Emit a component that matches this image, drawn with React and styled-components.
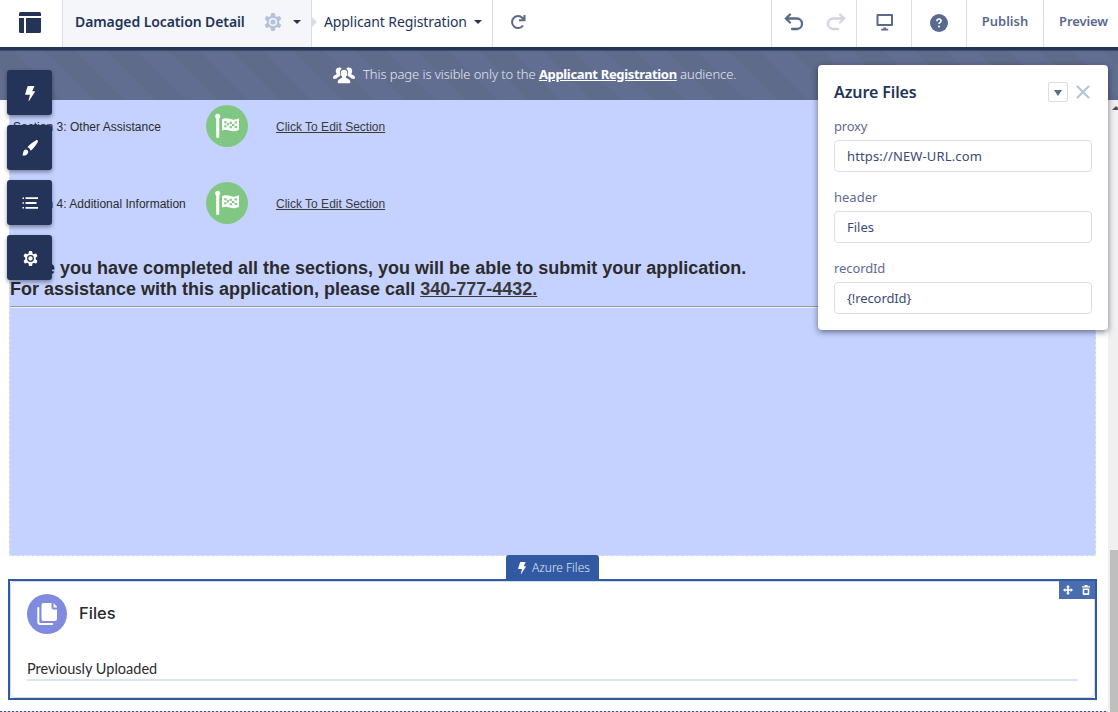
import React from "react";
import styled, { createGlobalStyle } from "styled-components";

const ui = '"Noto Sans", "Open Sans", sans-serif';

const Global = createGlobalStyle`
  * { box-sizing: border-box; }
  body { margin: 0; background: #fff; overflow: hidden; }
`;

const Shell = styled.div`
  position: relative;
  display: flex;
  flex-direction: column;
  width: 1118px;
  height: 712px;
  overflow: hidden;
  font-family: ${ui};
  color: #243458;
`;

const TopBar = styled.header`
  display: flex;
  flex: none;
  height: 50px;
  border-bottom: 3px solid #243458;
  background: #fff;
`;

const Cell = styled.div`
  display: flex;
  flex: none;
  align-items: center;
  justify-content: ${(p) => p.$justify || "center"};
  width: ${(p) => p.$width}px;
  padding: 0 ${(p) => p.$right || 0}px ${(p) => p.$bottom || 3}px ${(p) => p.$left || 0}px;
  border-left: ${(p) => (p.$line ? "1px solid #d8dde6" : "0")};
  background: ${(p) => p.$fill || "transparent"};
  position: relative;
`;

const Spacer = styled.div`
  flex: 1;
`;

const Label = styled.span`
  font-size: ${(p) => p.$size || 14}px;
  font-weight: ${(p) => p.$weight || 400};
  letter-spacing: ${(p) => p.$track || 0}px;
  color: ${(p) => p.$color || "inherit"};
  line-height: 20px;
  white-space: nowrap;
`;

const Icon = styled.svg`
  display: block;
  flex: none;
  margin-left: ${(p) => p.$ml || 0}px;
  margin-right: ${(p) => p.$mr || 0}px;
  margin-top: ${(p) => p.$mt || 0}px;
`;

const Caret = styled.i`
  flex: none;
  margin-left: ${(p) => p.$ml || 0}px;
  border: 4px solid transparent;
  border-top: 4px solid ${(p) => p.$color || "#243458"};
  border-bottom: 0;
`;

const Chevron = styled.i`
  position: absolute;
  left: 0;
  top: 17px;
  border: 5px solid transparent;
  border-left-color: #d8dde6;
  border-right: 0;
`;

const Banner = styled.div`
  display: flex;
  flex: none;
  align-items: center;
  height: 50px;
  padding: 0 0 2px 333px;
  gap: 8px;
  color: #e3e7f0;
  background: repeating-linear-gradient(45deg, #626e91 0 22px, #5f6b8a 22px 44px);
  box-shadow: inset 0 2px 1px -1px rgba(30, 40, 70, 0.5);
`;

const AudienceLink = styled.b`
  color: #fff;
  font-weight: 700;
  letter-spacing: -0.33px;
  text-decoration: underline;
`;

const Workspace = styled.main`
  display: flex;
  flex: 1;
  min-height: 0;
`;

const Page = styled.div`
  width: 1108px;
  padding-left: 9px;
`;

const Region = styled.section`
  width: 1087px;
  height: 456px;
  padding: 5px 0 0;
  border: 1px dashed #dfe5f5;
  border-top: 0;
  background: #c5d2ff;
  font-family: "Liberation Sans", Arial, sans-serif;
  color: #2b2b2b;
`;

const SectionRow = styled.div`
  display: grid;
  grid-template-columns: 196px 70px auto;
  align-items: center;
  height: 42px;
  margin-bottom: 35px;
  font-size: 12px;
`;

const SectionName = styled.span`
  padding: 2px 0 0 3px;
  letter-spacing: 0.02px;
`;

const EditLink = styled.span`
  padding-top: 2px;
  color: #3a3a3c;
  text-decoration: underline;
`;

const Notice = styled.p`
  margin: -1px 0 6px;
  font-size: 18px;
  font-weight: 700;
  line-height: 21px;
`;

const Phone = styled.span`
  color: #3a3a3c;
  text-decoration: underline;
`;

const Rule = styled.hr`
  margin: 0;
  border: 0;
  border-top: 1px solid #9a9a9a;
  border-bottom: 1px solid #eee;
`;

const TabRow = styled.div`
  display: flex;
  justify-content: center;
  height: 24px;
  margin-top: -1px;
  width: 1087px;
  position: relative;
`;

const Tab = styled.div`
  display: flex;
  align-items: center;
  width: 93px;
  height: 24px;
  padding: 2px 0 0 12px;
  gap: 6px;
  border-radius: 3px 3px 0 0;
  background: #325aa3;
`;

const Selected = styled.section`
  position: relative;
  width: 1089px;
  height: 121px;
  margin-left: -1px;
  border: 2px solid #325aa3;
`;

const Card = styled.div`
  height: 117px;
  padding: 12px 16px 0;
  border: 1px solid #d5d9e2;
  border-radius: 4px;
`;

const CardHead = styled.div`
  display: flex;
  align-items: center;
  gap: 12px;
  height: 40px;
`;

const CardTitle = styled.h2`
  margin: 0;
  padding-bottom: 2px;
  font: 500 16.5px/24px Inter, sans-serif;
  color: #272b30;
`;

const Uploaded = styled.div`
  margin-top: 23px;
  height: 24px;
  border-bottom: 2px solid #dbe4f3;
  font: 400 14.5px/24px Lato, sans-serif;
  color: #2b2c2e;
`;

const Tools = styled.div`
  position: absolute;
  right: 0;
  top: 0;
  display: flex;
  align-items: center;
  width: 36px;
  height: 18px;
  padding: 0 5px 0 4px;
  justify-content: space-between;
  background: #4a6db0;
`;

const PageEnd = styled.div`
  height: 1px;
  margin: 11px 0 0 -9px;
  background: repeating-linear-gradient(90deg, #43557c 0 2px, #d5dae3 2px 4px);
`;

const Scrollbar = styled.div`
  display: flex;
  flex-direction: column;
  width: 10px;
  background: #f0f0f0;
`;

const ScrollArrow = styled.i`
  margin: 6px 0 0 4px;
  width: 0;
  border: 4px solid transparent;
  border-top: 0;
  border-bottom-color: #505050;
`;

const Thumb = styled.div`
  flex: none;
  height: 162px;
  margin: auto 0 0 2px;
  background: #bfbfbf;
`;

const Rail = styled.nav`
  position: absolute;
  left: 7px;
  top: 70px;
  display: grid;
  gap: 10px;
`;

const RailButton = styled.div`
  display: grid;
  place-items: center;
  width: 45px;
  height: 45px;
  padding: 1px 0 0 1px;
  border-radius: 3px;
  background: #243458;
  box-shadow: 0 2px 4px rgba(0, 0, 0, 0.4);
`;

const Panel = styled.aside`
  position: absolute;
  left: 818px;
  top: 65px;
  width: 290px;
  height: 265px;
  padding: 16px;
  border-radius: 4px;
  background: #fff;
  box-shadow: 0 2px 6px rgba(10, 20, 50, 0.55);
`;

const PanelHead = styled.div`
  display: flex;
  align-items: center;
  height: 22px;
  margin-bottom: 14px;
`;

const MenuButton = styled.div`
  display: grid;
  place-items: center;
  width: 20px;
  height: 20px;
  margin-left: auto;
  border: 1px solid #d8dde6;
  border-radius: 2px;
`;

const MenuCaret = styled.i`
  border: 4.5px solid transparent;
  border-top: 6px solid #5a698c;
  border-bottom: 0;
  margin-top: 2px;
`;

const Field = styled.div`
  height: 71px;
`;

const FieldLabel = styled.div`
  height: 23px;
  font-size: 13px;
  line-height: 19px;
  letter-spacing: ${(p) => p.$track || 0}px;
  color: #5f6b8f;
`;

const Input = styled.div`
  display: flex;
  align-items: center;
  height: 32px;
  padding: 0 12px;
  border: 1px solid #d8dde6;
  border-radius: 4px;
  font-size: 13px;
  letter-spacing: ${(p) => p.$track || 0}px;
  color: #3c4b72;
`;

const GEAR =
  "M6.900 1.200Q7 0 8 0h2Q11 0 11.100 1.200L11.400 3l1.500.9 1.700-.7q1.100-.4 1.600.5l.8 1.500q.5.900-.4 1.600L15.200 8v2l1.400 1.200q.9.700.4 1.600l-.8 1.500q-.5.900-1.600.5l-1.700-.7-1.500.9-.3 1.800Q11 18 10 18H8Q7 18 6.900 16.800L6.600 15l-1.500-.9-1.700.7q-1.100.4-1.600-.5L1 12.800q-.5-.9.400-1.600L2.800 10V8L1.400 6.800Q.5 6.100 1 5.200l.8-1.500q.5-.9 1.600-.5l1.700.7L6.600 3z";

const Gear = ({ size, color, hole, ...rest }) => (
  <Icon width={size} height={size} viewBox="0 0 18 18" {...rest}>
    <path fill={color} d={GEAR} />
    <circle cx="9" cy="9" r="4.100" fill={hole} />
    <circle cx="9" cy="9" r="2.600" fill={color} />
  </Icon>
);

const Bolt = ({ w, h }) => (
  <Icon width={w} height={h} viewBox="0 0 10 15">
    <path fill="#fff" d="M3.300 0h5.500c.5 0 .6.3.4.7L7.200 5.200h2.300c.5 0 .6.400.3.800L4.200 14.700c-.4.500-.8.300-.6-.3l1.400-5.600H.7c-.5 0-.7-.3-.5-.8L2.500.6C2.600.2 2.900 0 3.300 0z" />
  </Icon>
);

const checks = [[9.2, 8.2], [14.600, 8.8], [19.600, 8.400], [11.8, 10.2], [17, 10.9], [9.2, 12.2], [14.600, 13.2], [19.600, 12.9]];

const Flag = () => (
  <Icon width="42" height="42" viewBox="0 0 42 42">
    <circle cx="21" cy="21" r="21" fill="#81c784" />
    <g transform="translate(9 8)" fill="#fff">
      <circle cx="2.700" cy="3.200" r="2.500" />
      <rect x="1.200" y="3.500" width="3" height="21.500" rx="1.500" />
      <path d="M7 6.300c2.500-1.300 5-1.300 8.500-.2 3.200 1 5.500.6 8.500-.9V16.800c-3 1.500-5.500 1.900-8.500 1C12 16.600 9.500 16.300 7 17.500z" />
      {checks.map(([x, y]) => (
        <rect key={x + "-" + y} x={x} y={y} width="2.300" height="2.100" fill="#81c784" />
      ))}
    </g>
  </Icon>
);

const Section = ({ name }) => (
  <SectionRow>
    <SectionName>{name}</SectionName>
    <Flag />
    <EditLink>Click To Edit Section</EditLink>
  </SectionRow>
);

const Property = ({ label, value, labelTrack, track }) => (
  <Field>
    <FieldLabel $track={labelTrack}>{label}</FieldLabel>
    <Input $track={track}>{value}</Input>
  </Field>
);

export default function App() {
  return (
    <Shell>
      <Global />
      <TopBar>
        <Cell $width={62} $justify="flex-start" $left={19}>
          <Icon width="22" height="21" viewBox="0 0 22 21" fill="#243458">
            <path d="M1.500 0h19A1.500 1.500 0 0 1 22 1.500V4H0V1.500A1.500 1.500 0 0 1 1.500 0zM0 6h5v15H1.500A1.500 1.500 0 0 1 0 19.500zM7 6h15v13.500a1.500 1.500 0 0 1-1.500 1.500H7z" />
          </Icon>
        </Cell>
        <Cell $width={249} $line $fill="#f4f6fa" $justify="flex-start" $left={12}>
          <Label $weight={600} $track={-0.1}>Damaged Location Detail</Label>
          <Gear size={18} color="#b5c3da" hole="#f4f6fa" $ml={19} $mt={-1} />
          <Caret $ml={11} />
        </Cell>
        <Cell $width={181} $line $justify="flex-start" $left={12}>
          <Chevron />
          <Label $track={-0.1}>Applicant Registration</Label>
          <Caret $ml={7} />
        </Cell>
        <Cell $width={52} $line $right={2} $bottom={4}>
          <Icon width="16" height="16" viewBox="0 0 16 16" fill="none" stroke="#5a698c" strokeWidth="2">
            <path d="M13 11.500A6 6 0 1 1 12.500 4L14 5.500M14.500 1v5.200H9" />
          </Icon>
        </Cell>
        <Spacer />
        <Cell $width={85} $line $left={1} $bottom={4}>
          <Icon width="20" height="18" viewBox="0 0 20 18" fill="none" stroke="#5a698c" strokeWidth="2.300" strokeLinecap="round" strokeLinejoin="round">
            <path d="M6 1.500L1.800 5.500 6 9.500M2 5.500h11a5 5 0 0 1 5 5v.500a5 5 0 0 1-5 5H8" />
          </Icon>
          <Icon width="20" height="18" viewBox="0 0 20 18" fill="none" stroke="#d0d4e0" strokeWidth="2.300" strokeLinecap="round" strokeLinejoin="round" $ml={22}>
            <path d="M14 1.500l4.200 4-4.200 4M18 5.500H7a5 5 0 0 0-5 5v.500a5 5 0 0 0 5 5h5" />
          </Icon>
        </Cell>
        <Cell $width={55} $line $left={1}>
          <Icon width="18" height="17" viewBox="0 0 18 17" fill="#5a698c">
            <path fillRule="evenodd" d="M1.500 0h14.500a1 1 0 0 1 1 1v10a1 1 0 0 1-1 1H1.500a1 1 0 0 1-1-1V1a1 1 0 0 1 1-1zM2.500 2v8H15V2z" />
            <path d="M7.500 13.500h2.500v1.300h2.200V16.500h-7v-1.700h2.300z" />
          </Icon>
        </Cell>
        <Cell $width={55} $line>
          <Icon width="18" height="18" viewBox="0 0 18 18" $mt={1}>
            <circle cx="9" cy="9" r="9" fill="#5a698c" />
            <path d="M6.900 7.200C6.900 5.800 7.800 5 9 5s2.100.8 2.100 1.900c0 1.500-2.100 1.500-2.100 3.200" fill="none" stroke="#fff" strokeWidth="1.500" />
            <circle cx="9" cy="12.500" r="1" fill="#fff" />
          </Icon>
        </Cell>
        <Cell $width={77} $line $bottom={5}>
          <Label $size={13} $weight={600} $color="#5a698c">Publish</Label>
        </Cell>
        <Cell $width={75} $line $justify="flex-start" $left={15} $bottom={5}>
          <Label $size={13} $weight={600} $color="#5a698c" $track={-0.1}>Preview</Label>
        </Cell>
      </TopBar>

      <Banner>
        <Icon width="22" height="17" viewBox="0 0 22 17" fill="#fff" $mt={2}>
          <path d="M6.200.500c1.300 0 2 .5 2.500 1.200C6.800 3 6.500 5.300 7.400 7.800c.3.900-.2 1.300-1.500 1.900-1.300.5-2.200 1.200-2.600 2H.6c-.5 0-.6-.3-.6-.7 0-1.800 1-2.400 2.900-3.200.9-.4.900-.9.400-1.700C2.200 4 2.800.500 6.200.500zM15.800.500c-1.300 0-2 .5-2.500 1.200 1.900 1.300 2.200 3.600 1.300 6.100-.3.900.2 1.300 1.500 1.900 1.300.5 2.200 1.200 2.600 2h2.700c.5 0 .6-.3.600-.7 0-1.800-1-2.400-2.900-3.200-.9-.4-.9-.9-.4-1.700C19.800 4 19.200.500 15.800.500z" />
          <path d="M11 2.700c2.100 0 3.300 1.500 3.300 3.500 0 1.500-.5 2.400-1.100 3.100-.6.900-.4 1.500.6 1.900 2.300.9 3.500 1.700 3.500 3.700 0 .9-.4 1.300-1.100 1.300H5.800c-.7 0-1.100-.4-1.100-1.300 0-2 1.200-2.800 3.500-3.700 1-.4 1.200-1 .6-1.900-.6-.7-1.100-1.600-1.100-3.100 0-2 1.200-3.500 3.300-3.500z" />
        </Icon>
        <Label $size={13} $weight={300} $track={-0.08}>
          This page is visible only to the <AudienceLink>Applicant Registration</AudienceLink> audience.
        </Label>
      </Banner>

      <Workspace>
        <Page>
          <Region>
            <Section name="Section 3: Other Assistance" />
            <Section name="Section 4: Additional Information" />
            <Notice>
              Once you have completed all the sections, you will be able to submit your application.
              <br />
              For assistance with this application, please call <Phone>340-777-4432.</Phone>
            </Notice>
            <Rule />
          </Region>
          <TabRow>
            <Tab>
              <Bolt w={8} h={12} />
              <Label $size={12} $weight={300} $color="#dfe7f7" $track={-0.03}>Azure Files</Label>
            </Tab>
          </TabRow>
          <Selected>
            <Card>
              <CardHead>
                <Icon width="40" height="40" viewBox="0 0 40 40">
                  <circle cx="20" cy="20" r="20" fill="#808be0" />
                  <path fill="#fff" d="M16.500 9h8v4.500a2 2 0 0 0 2 2H30v9.500a2 2 0 0 1-2 2H16.500a2 2 0 0 1-2-2V11a2 2 0 0 1 2-2zM26.500 9L30 12.800v.700h-3.500z" />
                  <path fill="none" stroke="#fff" strokeWidth="2" strokeLinecap="round" d="M11.300 14v14a2 2 0 0 0 2 2h12" />
                </Icon>
                <CardTitle>Files</CardTitle>
              </CardHead>
              <Uploaded>Previously Uploaded</Uploaded>
            </Card>
            <Tools>
              <Icon width="10" height="10" viewBox="0 0 10 10" fill="#fff">
                <path d="M5 0l2 2.300H5.800v1.900h1.900V3L10 5 7.700 7V5.800H5.800v1.900H7L5 10 3 7.700h1.200V5.800H2.300V7L0 5l2.300-2v1.200h1.900V2.300H3z" />
              </Icon>
              <Icon width="8" height="10" viewBox="0 0 8 10" fill="#fff">
                <path fillRule="evenodd" d="M2.500 0h3v1.300H8v1.200H0V1.300h2.500zM.700 3.500h6.600V9a1 1 0 0 1-1 1H1.700a1 1 0 0 1-1-1zM2.300 5v3.200h3.400V5z" />
              </Icon>
            </Tools>
          </Selected>
          <PageEnd />
        </Page>
        <Scrollbar>
          <ScrollArrow />
          <Thumb />
        </Scrollbar>
      </Workspace>

      <Rail>
        <RailButton><Bolt w={10} h={15} /></RailButton>
        <RailButton>
          <Icon width="16" height="16" viewBox="0 0 16 16" fill="#fff">
            <path d="M15.600.400c.5.500.4 1.200-.1 2C13.500 5.700 11 8.700 8.700 10.800 8.400 9.200 7.200 7.700 5.400 7.200 7.700 4.600 10.600 2.200 13.700.500c.8-.5 1.500-.6 1.900-.1zM3.800 9.500c1.400.1 2.300 1.100 2.500 2.400-.5 2.500-2.800 3.900-5.600 3.600-.4-.1-.5-.5-.1-.8C1.300 14.200.9 13.400 1.200 12.200 1.600 10.700 2.500 9.800 3.800 9.500z" />
          </Icon>
        </RailButton>
        <RailButton>
          <Icon width="16" height="12" viewBox="0 0 16 12" fill="#fff">
            <path d="M.500.500h1.500v1.500H.500zM3.500.300H16v1.700H3.500zM.500 5.200h1.500v1.600H.500zM3.500 5h11v2h-11zM.500 10h1.500v1.500H.500zM3.500 10H16v1.700H3.500z" />
          </Icon>
        </RailButton>
        <RailButton><Gear size={15} color="#fff" hole="#243458" /></RailButton>
      </Rail>

      <Panel>
        <PanelHead>
          <Label $size={16} $weight={600} $track={-0.1}>Azure Files</Label>
          <MenuButton><MenuCaret /></MenuButton>
          <Icon width="14" height="14" viewBox="0 0 14 14" fill="none" stroke="#b5c3da" strokeWidth="2" strokeLinecap="round" $ml={8} $mr={2}>
            <path d="M1.500 1.500l11 11M12.500 1.500l-11 11" />
          </Icon>
        </PanelHead>
        <Property label="proxy" value="https://NEW-URL.com" labelTrack={-0.2} track={0.14} />
        <Property label="header" value="Files" />
        <Property label="recordId" value="{!recordId}" labelTrack={-0.1} track={-0.1} />
      </Panel>
    </Shell>
  );
}
